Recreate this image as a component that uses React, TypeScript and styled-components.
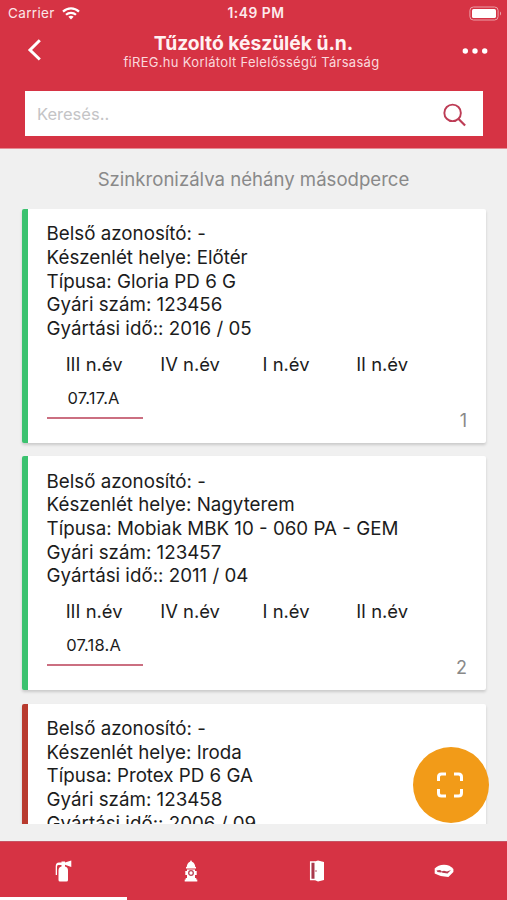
import React from "react";
import styled, { createGlobalStyle } from "styled-components";

const Global = createGlobalStyle`
  * { box-sizing: border-box; }
  body { margin: 0; background: #f0f0f0; font-family: Inter, "Liberation Sans", sans-serif; }
`;

const Screen = styled.div`
  width: 507px;
  height: 900px;
  display: flex;
  flex-direction: column;
  overflow: hidden;
  background: #f0f0f0;
  color: #1c1c1c;
`;

const Header = styled.header`
  height: 149px;
  flex: none;
  background: #d63344;
  color: #fff;
  border-bottom: 1px solid #e58c94;
`;

const StatusBar = styled.div`
  height: 27px;
  display: grid;
  grid-template-columns: 1fr auto 1fr;
  align-items: center;
  padding: 0 5px 0 8px;
  font-size: 13.5px;
  line-height: 27px;
`;

const Carrier = styled.div`
  display: flex;
  align-items: center;
  gap: 7px;
  letter-spacing: 0.35px;
  color: #fbe6e8;
`;

const Clock = styled.div`
  padding-left: 2px;
  font-weight: 600;
  font-size: 13.8px;
  letter-spacing: 0.55px;
  color: #fdebed;
`;

const BatterySlot = styled.div`
  display: flex;
  justify-content: flex-end;
`;

const NavBar = styled.div`
  height: 64px;
  display: grid;
  grid-template-columns: 60px 1fr 60px;
`;

const NavButton = styled.button<{ $end?: boolean }>`
  height: 46px;
  border: 0;
  padding: ${(p) => (p.$end ? "2px 19px 0 0" : "0 0 0 27px")};
  background: none;
  color: #fff;
  display: flex;
  align-items: center;
  justify-content: ${(p) => (p.$end ? "flex-end" : "flex-start")};
`;

const Heading = styled.div`
  text-align: center;
  white-space: nowrap;
  padding-top: 4px;
`;

const Title = styled.h1`
  margin: 0;
  font-size: 19.3px;
  font-weight: 700;
  line-height: 24px;
  letter-spacing: -0.04px;
  color: #fff1f2;
`;

const Subtitle = styled.div`
  font-size: 13px;
  line-height: 15px;
  letter-spacing: 0.3px;
  color: #fad9dd;
  padding-right: 4px;
`;

const SearchBox = styled.label`
  height: 45px;
  margin: 0 24px 0 25px;
  padding: 0 16px 0 12px;
  background: #fff;
  display: flex;
  align-items: center;
  justify-content: space-between;
`;

const SearchInput = styled.input`
  flex: 1;
  min-width: 0;
  border: 0;
  outline: 0;
  padding: 1px 0 0;
  font: 400 16.5px Inter, "Liberation Sans", sans-serif;
  &::placeholder { color: #c4c4c6; opacity: 1; }
`;

const SearchIconBox = styled.span`
  display: flex;
  padding-top: 3px;
`;

const SyncNote = styled.div`
  height: 60px;
  flex: none;
  line-height: 60px;
  text-align: center;
  font-size: 18.6px;
  color: #898989;
  white-space: nowrap;
`;

const List = styled.main`
  height: 615px;
  flex: none;
  overflow: hidden;
  padding: 0 21px 0 22px;
`;

const Card = styled.article<{ $accent: string }>`
  height: 234px;
  margin-bottom: 13.4px;
  padding: 13.3px 0 0 18.6px;
  border-left: 6px solid ${(p) => p.$accent};
  border-radius: 2px;
  background: #fff;
  box-shadow: 0 2px 3px rgba(0, 0, 0, 0.16);
  display: flex;
  flex-direction: column;
`;

const Line = styled.div`
  height: 23.7px;
  line-height: 23.7px;
  font-size: 18.75px;
  white-space: nowrap;
`;

const Quarters = styled.div`
  display: grid;
  grid-template-columns: repeat(4, 96px);
  margin-top: 11px;
  text-align: center;
`;

const Quarter = styled.div`
  font-size: 18.4px;
  line-height: 24px;
  height: 24px;
  padding-right: 1px;
`;

const Check = styled.div`
  height: 43px;
  padding: 12px 2px 0 0;
  border-bottom: 2px solid #cb6f81;
  line-height: 20px;
  font-size: 16.5px;
  letter-spacing: 0.2px;
`;

const Index = styled.div`
  align-self: flex-end;
  margin: -10px 19px 0 0;
  font-size: 18px;
  line-height: 24px;
  color: #898989;
`;

const Scan = styled.button`
  position: fixed;
  left: 413px;
  top: 747px;
  width: 76px;
  height: 76px;
  border: 0;
  border-radius: 50%;
  padding: 0 2px 0 0;
  background: #f29b18;
  display: grid;
  place-items: center;
`;

const TabBar = styled.nav`
  height: 59px;
  flex: none;
  margin-top: auto;
  background: #d63344;
  border-top: 1px solid #c65464;
  display: grid;
  grid-template-columns: repeat(4, 1fr);
`;

const Tab = styled.button<{ $active?: boolean }>`
  border: 0;
  border-bottom: 3px solid ${(p) => (p.$active ? "#fff" : "transparent")};
  padding: 2px 0 0 1px;
  background: none;
  display: grid;
  place-items: center;
`;

const WifiIcon = () => (
  <svg width="18" height="13" viewBox="0 0 18 13" fill="none" stroke="#fff" strokeWidth="2.2">
    <path d="M1 4.6C5.5.3 12.5.3 17 4.6" />
    <path d="M4 7.8c2.8-2.6 7.2-2.6 10 0" />
    <path d="M9 12.5 6.4 9.8c1.5-1.4 3.7-1.4 5.2 0Z" fill="#fff" stroke="none" />
  </svg>
);

const BatteryIcon = () => (
  <svg width="33" height="15" viewBox="0 0 33 15">
    <rect x=".9" y="1" width="28.2" height="13" rx="3.5" fill="none" stroke="#eba0a8" />
    <rect x="3" y="3" width="24" height="9" rx="1.6" fill="#fff" />
    <path d="M31 5.5c1.4.7 1.4 3.3 0 4Z" fill="#eba0a8" />
  </svg>
);

const BackIcon = () => (
  <svg width="15" height="22" viewBox="0 0 15 22" fill="none" stroke="#fff" strokeWidth="3">
    <path d="M12.8 1.3 3 11l9.8 9.5" />
  </svg>
);

const MoreIcon = () => (
  <svg width="26" height="8" viewBox="0 0 26 8" fill="#fff">
    <circle cx="3.3" cy="4" r="2.7" />
    <circle cx="13" cy="4" r="2.7" />
    <circle cx="22.7" cy="4" r="2.7" />
  </svg>
);

const SearchIcon = () => (
  <svg width="24" height="24" viewBox="0 0 25 25" fill="none" stroke="#bd3c55" strokeWidth="2">
    <circle cx="10" cy="10.3" r="8.6" />
    <path d="m16 16.500 7 7" strokeWidth="2.3" />
  </svg>
);

const ScanIcon = () => (
  <svg width="28" height="26" viewBox="0 0 28 26" fill="none" stroke="#fff" strokeWidth="3">
    <path d="M2.5 9V5q0-3 3-3H10M18 2h4.500q3 0 3 3v4M25.500 17v4q0 3-3 3H18M10 24H5.500q-3 0-3-3v-4" />
  </svg>
);

const ExtinguisherIcon = () => (
  <svg width="18" height="22" viewBox="0 0 18 22" fill="#fff">
    <path d="M3.500 10.500Q3.500 7 6.500 6.500V5H3.300Q2 5 2 7v8H.7V6.500Q.7 2.500 4 2.500h2.500V1.500h3.500v1l6.300-2V7L10 4.800V6.500q3 .6 3 4V20q0 1.500-1.500 1.500h-6.500Q3.500 21.500 3.500 20Z" />
  </svg>
);

const HydrantIcon = () => (
  <svg width="14" height="22" viewBox="0 0 14 22" fill="#fff">
    <path d="M7 0 8 1.800Q11 3 11.300 7H12v1.500H2V7h.7Q3 3 6 1.800ZM3 9.500h8V11h1.700v4H11v3h1.300v1.500h1V21.500H.7v-2h1V18H3v-3H1.300v-4H3Z" />
    <circle cx="7" cy="13" r="2.300" fill="#fff" stroke="#b94255" strokeWidth="1.300" />
  </svg>
);

const DoorIcon = () => (
  <svg width="16" height="22" viewBox="0 0 16 22">
    <path d="M6 2H1.700v17.500H6" fill="#a9394c" stroke="#fff" strokeWidth="1.500" />
    <path d="M5.500 1.500 9 .5 15 2v18l-6 1.500L5.500 20Z" fill="#fff" />
    <circle cx="7" cy="11" r=".8" fill="#b94255" />
  </svg>
);

const BandageIcon = () => (
  <svg width="20" height="14" viewBox="0 0 20 14">
    <path d="M.7 4.500Q4 .7 10 .7T19.400 5v3l-5 5Q6 12.500.7 9.500Z" fill="#fff" />
    <path d="M2.500 6.600 6 6l2 1.300 2-.6 3 .9L17 6l-3.500 3.500-5-.8-5-.8Z" fill="#b93a4f" />
    <path d="m6.500 8.400 1-1 .9 1.200Z" fill="#fff" />
  </svg>
);

const devices = [
  { place: "Előtér", type: "Gloria PD 6 G", serial: "123456", made: "2016 / 05", check: "07.17.A", accent: "#3bc26f" },
  { place: "Nagyterem", type: "Mobiak MBK 10 - 060 PA - GEM", serial: "123457", made: "2011 / 04", check: "07.18.A", accent: "#3bc26f" },
  { place: "Iroda", type: "Protex PD 6 GA", serial: "123458", made: "2006 / 09", check: "", accent: "#b83a2e" },
];

const quarters = ["III n.év", "IV n.év", "I n.év", "II n.év"];

export default function App() {
  return (
    <Screen>
      <Global />
      <Header>
        <StatusBar>
          <Carrier>Carrier <WifiIcon /></Carrier>
          <Clock>1:49 PM</Clock>
          <BatterySlot><BatteryIcon /></BatterySlot>
        </StatusBar>
        <NavBar>
          <NavButton aria-label="Vissza"><BackIcon /></NavButton>
          <Heading>
            <Title>Tűzoltó készülék ü.n.</Title>
            <Subtitle>fiREG.hu Korlátolt Felelősségű Társaság</Subtitle>
          </Heading>
          <NavButton $end aria-label="Menü"><MoreIcon /></NavButton>
        </NavBar>
        <SearchBox>
          <SearchInput placeholder="Keresés.." />
          <SearchIconBox><SearchIcon /></SearchIconBox>
        </SearchBox>
      </Header>
      <SyncNote>Szinkronizálva néhány másodperce</SyncNote>
      <List>
        {devices.map((d, i) => (
          <Card key={d.serial} $accent={d.accent}>
            <Line>Belső azonosító: -</Line>
            <Line>Készenlét helye: {d.place}</Line>
            <Line>Típusa: {d.type}</Line>
            <Line>Gyári szám: {d.serial}</Line>
            <Line>Gyártási idő:: {d.made}</Line>
            {d.check && (
              <>
                <Quarters>
                  {quarters.map((q) => <Quarter key={q}>{q}</Quarter>)}
                  <Check>{d.check}</Check>
                </Quarters>
                <Index>{i + 1}</Index>
              </>
            )}
          </Card>
        ))}
      </List>
      <TabBar>
        <Tab $active aria-label="Tűzoltó készülék"><ExtinguisherIcon /></Tab>
        <Tab aria-label="Tűzcsap"><HydrantIcon /></Tab>
        <Tab aria-label="Ajtó"><DoorIcon /></Tab>
        <Tab aria-label="Egyéb"><BandageIcon /></Tab>
      </TabBar>
      <Scan aria-label="Beolvasás"><ScanIcon /></Scan>
    </Screen>
  );
}
